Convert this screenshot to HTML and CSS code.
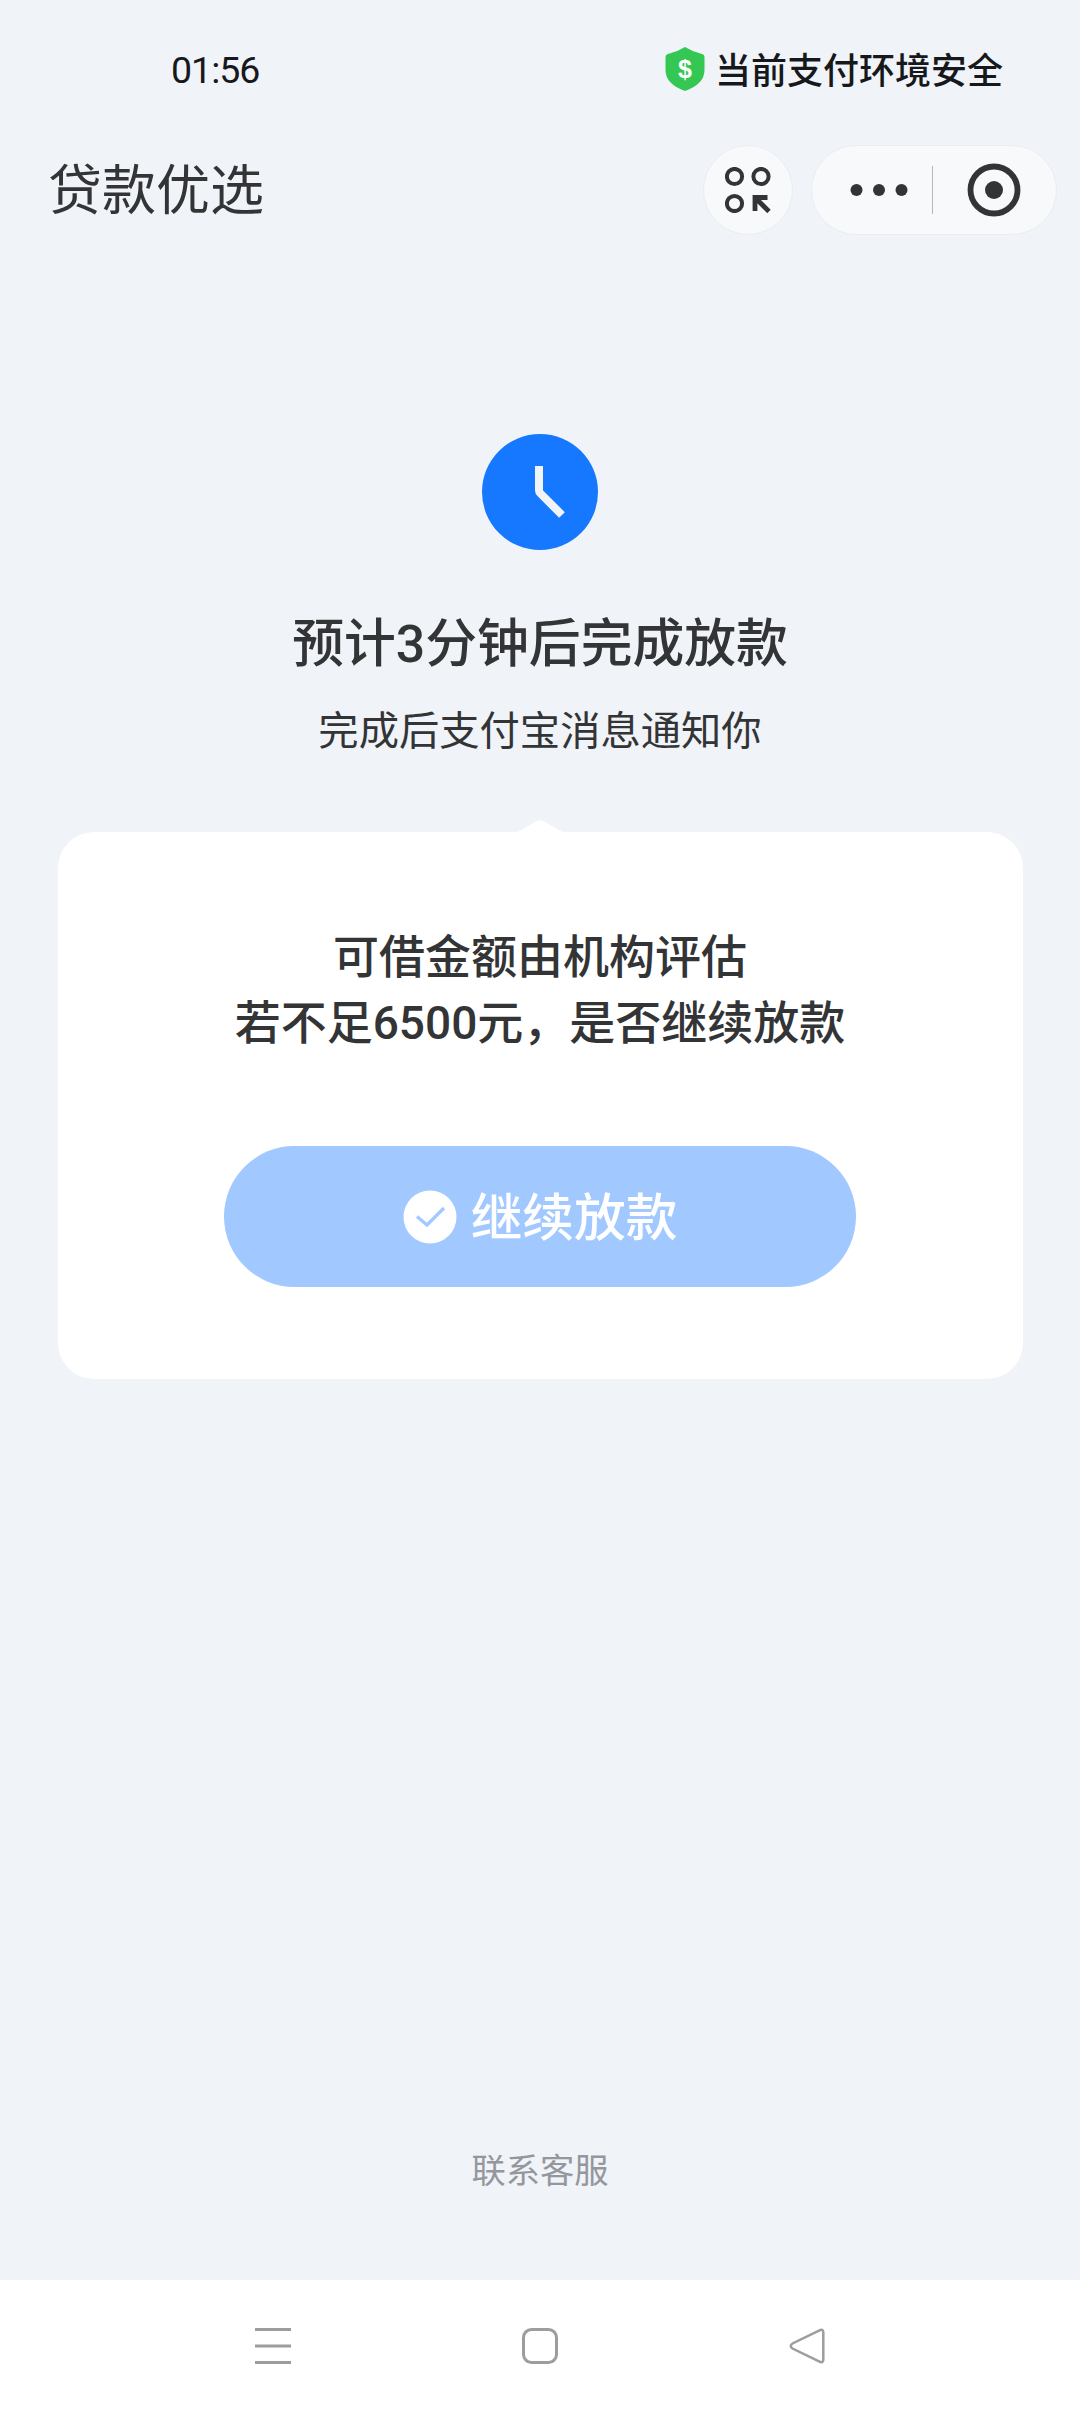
FILE: index.html
```html
<!DOCTYPE html>
<html lang="zh-CN">
<head>
<meta charset="utf-8">
<title>贷款优选</title>
<link rel="stylesheet" href="styles.css">
</head>
<body>
<div class="screen">
  <div class="status">
    <span class="time">01:56</span>
    <div class="safe">
      <svg class="shield" width="40" height="44" viewBox="0 0 40 44">
        <path d="M20 0 Q28 5 37 7 Q39.500 7.600 39.500 10 V23 Q39.500 37 20 44 Q0.500 37 0.500 23 V10 Q0.500 7.600 3 7 Q12 5 20 0Z" fill="#34c754"/>
        <text x="20" y="30.500" text-anchor="middle" class="dollar">$</text>
      </svg>
      <span>当前支付环境安全</span>
    </div>
  </div>
  <header class="header">
    <h1 class="title">贷款优选</h1>
    <div class="actions">
      <div class="round">
        <svg width="46" height="46" viewBox="0 0 46 46" fill="none" stroke="#333436" stroke-width="4">
          <circle cx="9.500" cy="9.500" r="7.600"/><circle cx="36" cy="9.500" r="7.600"/><circle cx="9.500" cy="36.500" r="7.600"/>
          <path d="M42.500 30.500H30V44M30.500 31L44 44.500" stroke-width="4.800"/>
        </svg>
      </div>
      <div class="capsule">
        <svg class="dots" width="58" height="12" viewBox="0 0 58 12" fill="#333436"><circle cx="6.500" cy="6" r="6"/><circle cx="29" cy="6" r="6"/><circle cx="51.500" cy="6" r="6"/></svg>
        <span class="divider"></span>
        <svg class="close" width="54" height="54" viewBox="0 0 54 54"><circle cx="27" cy="27" r="23.500" fill="none" stroke="#333436" stroke-width="5.800"/><circle cx="27" cy="27" r="9" fill="#333436"/></svg>
      </div>
    </div>
  </header>
  <main class="main">
    <svg class="clock" width="116" height="116" viewBox="0 0 116 116"><circle cx="58" cy="58" r="58" fill="#1677ff"/><path d="M57 32V56.500Q57 58 58.500 59.500L80 81" fill="none" stroke="#f0f3f8" stroke-width="8"/></svg>
    <h2 class="heading">预计<span class="num">3</span>分钟后完成放款</h2>
    <p class="sub">完成后支付宝消息通知你</p>
    <section class="card">
      <svg class="tip" width="56" height="13" viewBox="0 0 56 13"><path d="M0 13Q6 12.500 11 9L23 2Q28 -1.500 33 2L45 9Q50 12.500 56 13Z" fill="#fff"/></svg>
      <p class="ask">可借金额由机构评估<br>若不足<span class="num">6500</span>元，是否继续放款</p>
      <button class="confirm">
        <svg width="54" height="54" viewBox="0 0 54 54"><circle cx="27" cy="27" r="26.500" fill="#fff"/><path d="M14 26.500L24 35L41 18" fill="none" stroke="#a1c8ff" stroke-width="3.200"/></svg>
        <span class="confirm-label">继续放款</span>
      </button>
    </section>
    <a class="service">联系客服</a>
  </main>
  <nav class="nav">
    <svg width="36" height="36" viewBox="0 0 36 36"><path d="M0 1.500H36M0 18H36M0 34.500H36"/></svg>
    <svg width="36" height="36" viewBox="0 0 36 36"><rect x="1.500" y="1.500" width="33" height="33" rx="8"/></svg>
    <svg width="36" height="36" viewBox="0 0 36 36"><path d="M30.500 2.300Q34 0.500 34.300 4V32Q34 35.500 30.500 33.700L3.500 20.500Q0 18 3.500 15.500Z" stroke-width="2.500"/></svg>
  </nav>
</div>
</body>
</html>
```
FILE: styles.css
```css
* { box-sizing: border-box; }
body { margin: 0; }
h1, h2, p { margin: 0; font-weight: 400; }
svg { display: block; flex: none; }
.screen {
  width: 1080px;
  height: 2412px;
  display: flex;
  flex-direction: column;
  background: #f0f3f8;
  color: #333436;
  font-family: "Noto Sans CJK SC", sans-serif;
  white-space: nowrap;
}
.num { font-family: Roboto, sans-serif; line-height: 1; }
.status {
  height: 138px;
  padding: 0 77px 0 171px;
  display: flex;
  justify-content: space-between;
  align-items: center;
  font-size: 36px;
  line-height: 50px;
  font-weight: 500;
  color: #17181b;
}
.time { font: 400 37.5px/50px Roboto, sans-serif; letter-spacing: -1px; padding-top: 2px; }
.safe { display: flex; align-items: center; gap: 10px; }
.safe span { padding-bottom: 2px; }
.dollar { font: 700 25px "Liberation Sans", sans-serif; fill: #fff; }
.header {
  height: 104px;
  padding: 0 23px 0 48px;
  display: flex;
  align-items: center;
  justify-content: space-between;
}
.title { padding-bottom: 6px; font-size: 54px; line-height: 70px; font-weight: 400; }
.actions { display: flex; gap: 18px; }
.round, .capsule {
  height: 90px;
  border-radius: 45px;
  border: 1px solid #e9edf2;
  background: #f8f9fb;
  display: flex;
  align-items: center;
}
.round { width: 90px; justify-content: center; }
.capsule { width: 246px; padding-left: 38px; }
.divider { width: 1px; height: 48px; margin-left: 24px; background: #b5b7ba; }
.close { margin-left: 34px; }
.main {
  height: 2038px;
  padding-top: 192px;
  display: flex;
  flex-direction: column;
  align-items: center;
}
.heading { margin-top: 55px; font-size: 51.8px; line-height: 70px; font-weight: 500; }
.sub { margin-top: 25px; font-size: 40.3px; line-height: 56px; }
.card {
  position: relative;
  width: 965px;
  height: 547px;
  margin-top: 76px;
  padding-top: 89px;
  border-radius: 36px;
  background: #fff;
  display: flex;
  flex-direction: column;
  align-items: center;
}
.tip { position: absolute; top: -12px; left: 454px; }
.ask { font-size: 46px; line-height: 65.5px; font-weight: 500; text-align: center; }
.confirm {
  width: 632px;
  height: 141px;
  margin-top: 94px;
  padding: 0;
  border: 0;
  border-radius: 71px;
  background: #a1c8ff;
  color: #fff;
  font: 500 51.7px/70px "Noto Sans CJK SC", sans-serif;
  display: flex;
  align-items: center;
  justify-content: center;
  gap: 14px;
}
.confirm-label { padding-bottom: 5px; }
.service { margin-top: auto; margin-bottom: 87px; font-size: 34.3px; line-height: 50px; color: #94979c; }
.nav {
  flex: 1;
  padding: 0 255px;
  background: #fff;
  display: flex;
  align-items: center;
  justify-content: space-between;
}
.nav svg { fill: none; stroke: #9d9d9d; stroke-width: 3; }
```
